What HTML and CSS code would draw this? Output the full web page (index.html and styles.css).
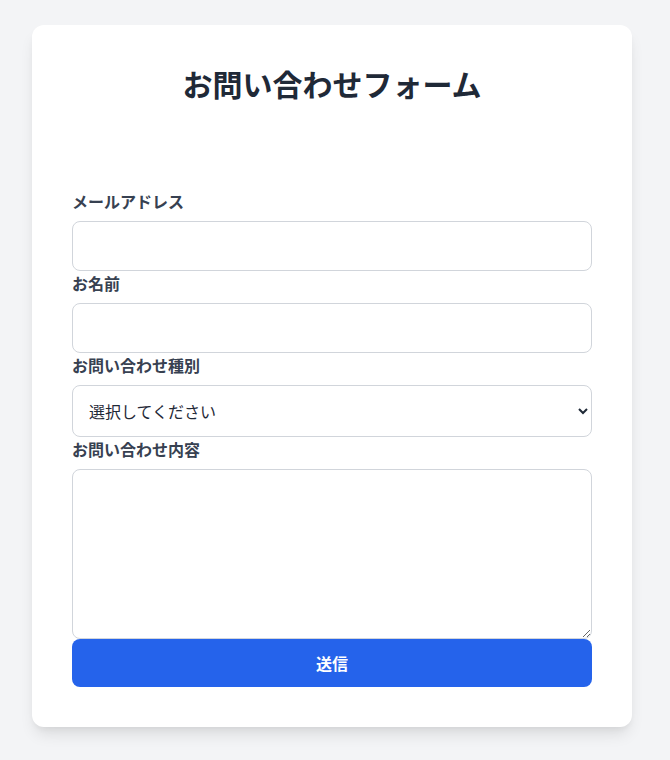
FILE: index.html
```html
<!DOCTYPE html>
<html lang="ja">
<head>
<meta charset="utf-8">
<title>お問い合わせフォーム</title>
<link rel="stylesheet" href="styles.css">
</head>
<body>
<main class="card">
  <h1 class="title">お問い合わせフォーム</h1>
  <form class="form">
    <div class="field">
      <label class="label" for="email">メールアドレス</label>
      <input class="control" id="email" type="email">
    </div>
    <div class="field">
      <label class="label" for="name">お名前</label>
      <input class="control" id="name" type="text">
    </div>
    <div class="field">
      <label class="label" for="type">お問い合わせ種別</label>
      <select class="control select" id="type">
        <option>選択してください</option>
      </select>
    </div>
    <div class="field">
      <label class="label" for="msg">お問い合わせ内容</label>
      <textarea class="control textarea" id="msg"></textarea>
    </div>
    <button class="submit" type="button">送信</button>
  </form>
</main>
</body>
</html>
```

FILE: styles.css
```css
html, body {
  margin: 0;
  padding: 0;
}
body {
  background: #f3f4f6;
  font-family: "Noto Sans CJK JP", "Noto Sans", sans-serif;
  color: #374151;
  padding: 25px 32px 40px;
}
.card {
  max-width: 600px;
  box-sizing: border-box;
  background: #ffffff;
  border-radius: 12px;
  box-shadow: 0 10px 15px -3px rgba(0, 0, 0, 0.1), 0 4px 6px -2px rgba(0, 0, 0, 0.05);
  padding: 40px;
}
.title {
  margin: 0 0 88px;
  text-align: center;
  font-size: 30px;
  line-height: 36px;
  font-weight: 700;
  color: #1f2937;
}
.form {
  display: flex;
  flex-direction: column;
}
.field {
  display: flex;
  flex-direction: column;
}
.label {
  font-size: 16px;
  line-height: 24px;
  font-weight: 700;
  color: #374151;
  margin-bottom: 8px;
}
.control {
  box-sizing: border-box;
  width: 100%;
  height: 50px;
  border: 1px solid #d1d5db;
  border-radius: 8px;
  background: #ffffff;
  font-family: inherit;
  font-size: 16px;
  color: #1f2937;
  padding: 0 16px;
  margin: 0;
}
.select {
  height: 52px;
  padding-left: 12px;
}
.textarea {
  height: 170px;
  padding: 12px 16px;
  resize: vertical;
  display: block;
}
.submit {
  height: 48px;
  border: none;
  border-radius: 8px;
  background: #2563eb;
  color: #ffffff;
  font-family: inherit;
  font-size: 16px;
  font-weight: 700;
  cursor: pointer;
}
```
